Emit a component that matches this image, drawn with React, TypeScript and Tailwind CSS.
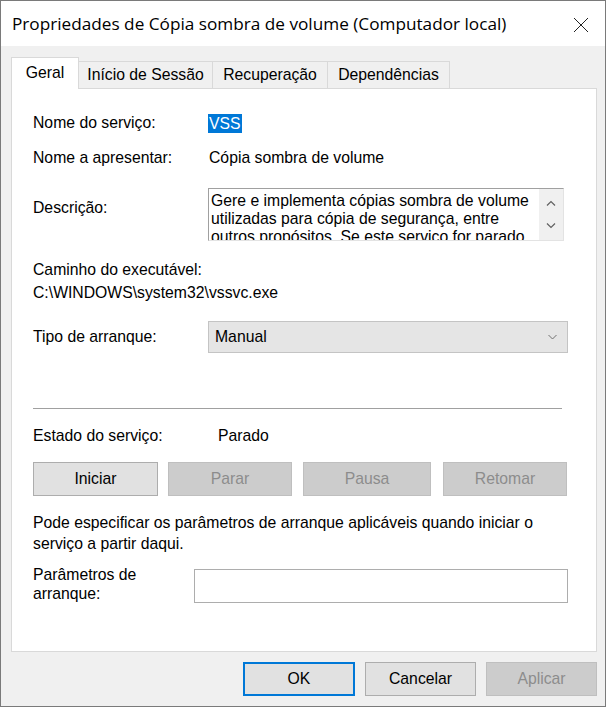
import React from 'react';

const body = { fontFamily: '"Liberation Sans", Arial, sans-serif' };
const title = { fontFamily: '"Open Sans", "Noto Sans", sans-serif' };

function Tab({ label, active, w }: { label: string; active?: boolean; w: string }) {
  if (active) {
    return (
      <div
        className={`${w} h-[32px] -mb-px relative z-10 bg-white border border-b-0 border-[#d9d9d9] flex items-center justify-center pb-[2px]`}
      >
        {label}
      </div>
    );
  }
  return (
    <div
      className={`${w} h-[27px] -ml-px border border-b-0 border-[#d9d9d9] bg-[#f0f0f0] flex items-center justify-center`}
    >
      {label}
    </div>
  );
}

function Btn({ label, w, disabled, primary }: { label: string; w: string; disabled?: boolean; primary?: boolean }) {
  let cls = 'bg-[#e1e1e1] border border-[#adadad] text-black';
  if (disabled) cls = 'bg-[#cccccc] border border-[#bfbfbf] text-[#8c8c8c]';
  if (primary) cls = 'bg-[#e1e1e1] border-2 border-[#0078d7] text-black';
  return <div className={`${w} shrink-0 h-[34px] flex items-center justify-center ${cls}`}>{label}</div>;
}

export default function App() {
  return (
    <div className="w-[608px] h-[708px] bg-white text-[15.75px] text-black" style={body}>
      <div className="w-[606px] h-[707px] border border-[#7a7a7a] flex flex-col">
        {/* title bar */}
        <div className="h-[45px] bg-white flex items-center justify-between pl-[11px] pr-[16px]">
          <span className="text-[17.2px]" style={title}>
            Propriedades de Cópia sombra de volume (Computador local)
          </span>
          <svg width="16" height="16" viewBox="0 0 16 16" className="mt-[2px]">
            <path d="M1 1 L15 15 M15 1 L1 15" stroke="#222" strokeWidth="1" />
          </svg>
        </div>

        <div className="flex-1 bg-[#f0f0f0] px-[10px] pr-[8px] pt-[11px] flex flex-col">
          {/* tabs */}
          <div className="flex items-end">
            <Tab label="Geral" active w="w-[68px]" />
            <Tab label="Início de Sessão" w="w-[135px]" />
            <Tab label="Recuperação" w="w-[116px]" />
            <Tab label="Dependências" w="w-[123px]" />
          </div>

          {/* panel */}
          <div className="h-[564px] bg-white border border-[#d9d9d9] pl-[21px] pr-[27px] flex flex-col">
            <div className="flex items-center h-[20px] mt-[24px]">
              <span className="w-[175px]">Nome do serviço:</span>
              <span className="bg-[#0078d7] text-white px-px h-[19px] leading-[19px]">VSS</span>
            </div>
            <div className="flex items-center h-[20px] mt-[15px]">
              <span className="w-[176px]">Nome a apresentar:</span>
              <span>Cópia sombra de volume</span>
            </div>
            <div className="flex mt-[20px]">
              <span className="w-[175px] mt-[8px]">Descrição:</span>
              <div className="w-[356px] h-[53px] border-t border-l border-[#a0a0a0] border-r border-b border-r-[#e3e3e3] border-b-[#e3e3e3] flex overflow-hidden">
                <div className="flex-1 pl-[2px] pt-[3px] leading-[18px] overflow-hidden whitespace-nowrap">
                  <div>Gere e implementa cópias sombra de volume</div>
                  <div>utilizadas para cópia de segurança, entre</div>
                  <div>outros propósitos. Se este serviço for parado,</div>
                </div>
                <div className="w-[24px] shrink-0 bg-[#f0f0f0] flex flex-col items-center justify-around py-[3px]">
                  <svg width="10" height="6" viewBox="0 0 10 6">
                    <path d="M1 5.5 L5 1.5 L9 5.5" stroke="#606060" strokeWidth="1.2" fill="none" />
                  </svg>
                  <svg width="10" height="6" viewBox="0 0 10 6">
                    <path d="M1 0.5 L5 4.5 L9 0.5" stroke="#606060" strokeWidth="1.2" fill="none" />
                  </svg>
                </div>
              </div>
            </div>
            <div className="h-[20px] mt-[19px] flex items-center">Caminho do executável:</div>
            <div className="h-[20px] mt-[3px] flex items-center">C:\WINDOWS\system32\vssvc.exe</div>
            <div className="flex items-center mt-[18px]">
              <span className="w-[175px]">Tipo de arranque:</span>
              <div className="w-[360px] h-[32px] bg-[#e5e5e5] border border-[#c4c4c4] flex items-center justify-between pl-[6px] pr-[10px]">
                <span>Manual</span>
                <svg width="9" height="6" viewBox="0 0 9 6">
                  <path d="M0.5 1 L4.5 5 L8.5 1" stroke="#707070" strokeWidth="1" fill="none" />
                </svg>
              </div>
            </div>
            <div className="h-px bg-[#a0a0a0] mt-[55px] w-[529px]" />
            <div className="flex items-center h-[20px] mt-[17px]">
              <span className="w-[185px]">Estado do serviço:</span>
              <span>Parado</span>
            </div>
            <div className="flex mt-[16px]">
              <Btn label="Iniciar" w="w-[125px]" />
              <div className="ml-[10px]">
                <Btn label="Parar" w="w-[124px]" disabled />
              </div>
              <div className="ml-[11px]">
                <Btn label="Pausa" w="w-[128px]" disabled />
              </div>
              <div className="ml-[12px]">
                <Btn label="Retomar" w="w-[124px]" disabled />
              </div>
            </div>
            <div className="mt-[16px] leading-[21px] whitespace-nowrap">
              <div>Pode especificar os parâmetros de arranque aplicáveis quando iniciar o</div>
              <div>serviço a partir daqui.</div>
            </div>
            <div className="flex mt-[11px]">
              <div className="w-[161px] leading-[19px]">
                <div>Parâmetros de</div>
                <div>arranque:</div>
              </div>
              <div className="w-[374px] h-[34px] mt-[4px] bg-white border border-[#adadad]" />
            </div>
          </div>

          {/* footer buttons */}
          <div className="flex justify-end gap-[10px] mt-[10px]">
            <Btn label="OK" w="w-[112px]" primary />
            <Btn label="Cancelar" w="w-[111px]" />
            <Btn label="Aplicar" w="w-[111px]" disabled />
          </div>
        </div>
      </div>
    </div>
  );
}
